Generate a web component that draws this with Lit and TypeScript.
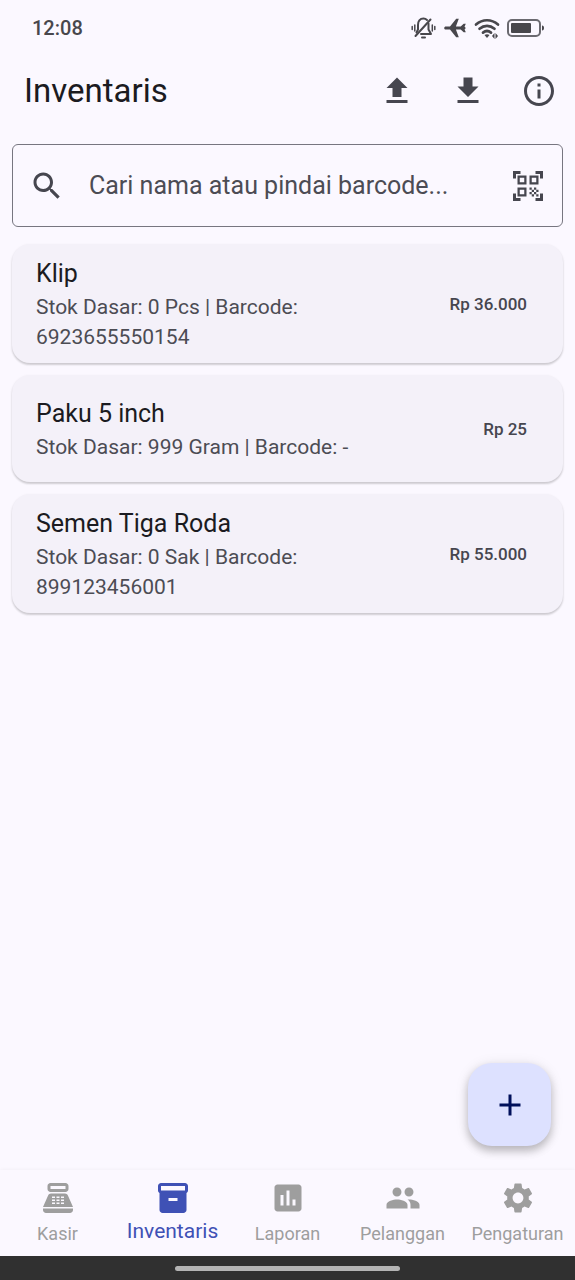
import { LitElement, html, svg, css } from "lit";
import { customElement, property, state } from "lit/decorators.js";
import { classMap } from "lit/directives/class-map.js";

const ICONS: Record<string, string> = {
  upload: "M5 18h14v2H5zM9 16h6v-6h4l-7-7-7 7h4z",
  download: "M19 9h-4V3H9v6H5l7 7 7-7zM5 18v2h14v-2H5z",
  info: "M11 7h2v2h-2zm0 4h2v6h-2zm1-9C6.48 2 2 6.48 2 12s4.48 10 10 10 10-4.48 10-10S17.52 2 12 2zm0 18c-4.41 0-8-3.59-8-8s3.59-8 8-8 8 3.59 8 8-3.59 8-8 8z",
  search: "M15.5 14h-.79l-.28-.27C15.41 12.59 16 11.11 16 9.5 16 5.91 13.09 3 9.5 3S3 5.91 3 9.5 5.91 16 9.5 16c1.61 0 3.09-.59 4.23-1.57l.27.28v.79l5 4.99L20.49 19l-4.99-5zm-6 0C7.01 14 5 11.99 5 9.5S7.01 5 9.5 5 14 7.01 14 9.5 11.99 14 9.5 14z",
  scan: "M9.5 6.5v3h-3v-3h3M11 5H5v6h6V5zm-1.5 9.5v3h-3v-3h3M11 13H5v6h6v-6zm6.5-6.5v3h-3v-3h3M19 5h-6v6h6V5zm-6 8h1.5v1.5H13V13zm1.5 1.5H16V16h-1.5v-1.5zM16 13h1.5v1.5H16V13zm-3 3h1.5v1.5H13V16zm1.5 1.5H16V19h-1.5v-1.5zM16 16h1.5v1.5H16V16zm1.5-1.5H19V16h-1.5v-1.5zm0 3H19V19h-1.5v-1.5zM22 7h-2V4h-3V2h5v5zm0 15v-5h-2v3h-3v2h5zM2 22h5v-2H4v-3H2v5zM2 2v5h2V4h3V2H2z",
  add: "M19 13h-6v6h-2v-6H5v-2h6V5h2v6h6v2z",
  register:
    "M17 2H7C5.9 2 5 2.9 5 4v2c0 1.1.9 2 2 2h10c1.1 0 2-.9 2-2V4c0-1.1-.9-2-2-2zm0 4H7V4h10v2zM20 22H4c-1.1 0-2-.9-2-2v-1h20v1c0 1.1-.9 2-2 2zM18.53 10.19C18.21 9.47 17.49 9 16.7 9H7.3c-.79 0-1.51.47-1.83 1.19L2 18h20l-3.47-7.81zM8 11h2v1H8zM8 13h2v1H8zM8 15h2v1H8zM11 11h2v1h-2zM11 13h2v1h-2zM11 15h2v1h-2zM14 11h2v1h-2zM14 13h2v1h-2zM14 15h2v1h-2z",
  box: "M20 2H4c-1 0-2 .9-2 2v3.01c0 .72.43 1.34 1 1.69V20c0 1.1 1.1 2 2 2h14c.9 0 2-.9 2-2V8.7c.57-.35 1-.97 1-1.69V4c0-1.1-1-2-2-2zm-5 12H9v-2h6v2zm5-7H4V4h16v3z",
  chart: "M19 3H5c-1.1 0-2 .9-2 2v14c0 1.1.9 2 2 2h14c1.1 0 2-.9 2-2V5c0-1.1-.9-2-2-2zM9 17H7v-7h2v7zm4 0h-2V7h2v10zm4 0h-2v-4h2v4z",
  people: "M16 11c1.66 0 2.99-1.34 2.99-3S17.66 5 16 5c-1.66 0-3 1.34-3 3s1.34 3 3 3zm-8 0c1.66 0 2.99-1.34 2.99-3S9.66 5 8 5C6.34 5 5 6.34 5 8s1.34 3 3 3zm0 2c-2.33 0-7 1.17-7 3.5V19h14v-2.500c0-2.330-4.670-3.500-7-3.500zm8 0c-.29 0-.62.02-.97.05 1.160.840 1.970 1.970 1.970 3.450V19h6v-2.500c0-2.330-4.670-3.500-7-3.500z",
  gear: "M19.140 12.940c.04-.3.06-.61.06-.94 0-.32-.02-.64-.07-.94l2.030-1.580c.18-.14.23-.41.12-.61l-1.920-3.320c-.12-.22-.37-.29-.59-.22l-2.390.96c-.5-.38-1.030-.7-1.620-.94l-.36-2.540c-.04-.24-.24-.41-.48-.41h-3.840c-.24 0-.43.17-.47.41l-.36 2.540c-.59.24-1.130.57-1.620.94l-2.390-.96c-.22-.08-.47 0-.59.22L2.740 8.870c-.12.21-.08.47.12.61l2.030 1.580c-.05.3-.09.63-.09.94s.02.64.07.94l-2.030 1.580c-.18.14-.23.41-.12.61l1.920 3.320c.12.22.37.29.59.22l2.390-.96c.5.38 1.030.7 1.620.94l.36 2.540c.05.24.24.41.48.41h3.840c.24 0 .44-.17.47-.41l.36-2.540c.59-.24 1.130-.56 1.620-.94l2.390.96c.22.08.47 0 .59-.22l1.920-3.320c.12-.22.07-.47-.12-.61l-2.010-1.580zM12 15.600c-1.980 0-3.600-1.620-3.600-3.600s1.620-3.600 3.600-3.600 3.600 1.620 3.600 3.600-1.620 3.600-3.600 3.600z",
};

@customElement("md-icon")
class MdIcon extends LitElement {
  @property() name = "";

  static styles = css`
    :host {
      display: block;
      width: 36px;
      height: 36px;
    }
    .glyph {
      display: block;
      width: 100%;
      height: 100%;
      fill: currentColor;
      fill-rule: evenodd;
    }
  `;

  render() {
    return html`<svg class="glyph" viewBox="0 0 24 24" aria-hidden="true">
      ${svg`<path d=${ICONS[this.name] ?? ""}></path>`}
    </svg>`;
  }
}

@customElement("status-bar")
class StatusBar extends LitElement {
  static styles = css`
    :host {
      display: flex;
      align-items: center;
      justify-content: space-between;
      height: 56px;
      padding: 0 30px 0 32px;
      color: #48474c;
      font-size: 20px;
      font-weight: 500;
    }
    .signals {
      display: flex;
      align-items: center;
      gap: 7px;
    }
    .line {
      fill: none;
      stroke: currentColor;
      stroke-linecap: round;
      stroke-linejoin: round;
    }
    .solid {
      fill: currentColor;
    }
    .shell {
      stroke: #6b6a70;
    }
  `;

  render() {
    return html`
      <time>12:08</time>
      <div class="signals">
        <svg width="25" height="24" viewBox="0 0 25 24" aria-hidden="true">
          <g class="line" stroke-width="2">
            <path d="M16 4C15 3 14 2.500 12.500 2.500C8.800 2.500 7 5.500 7 9v4.500L5.500 16.500"></path>
            <path d="M17.500 7.500v6l2.500 4.500H10"></path>
            <path d="M19.500 3.500L4.500 20"></path>
            <path d="M11 21.500h3"></path>
            <path d="M3.800 9v6M1.200 10.500v3M21.300 9v6M23.800 10.500v3" stroke-width="1.500"></path>
          </g>
        </svg>
        <svg width="24" height="24" viewBox="0 0 24 24" aria-hidden="true">
          <path
            class="solid"
            transform="matrix(-1 0 0 1 24 0)"
            d="M1.500 12c0-.8.4-1.200 1-1.300L1.200 7.800h2.100l3 2.600h4.800L8.200 2.800h2.600l6.200 7.600h4c1.100 0 1.800.7 1.800 1.600s-.7 1.600-1.800 1.600h-4l-6.200 7.600H8.200l2.900-7.600H6.300l-3 2.600H1.200l1.300-2.900c-.6-.1-1-.5-1-1.300z"
          ></path>
        </svg>
        <svg width="26" height="24" viewBox="0 0 26 24" aria-hidden="true">
          <g class="line" stroke-width="2.700">
            <path d="M2 8.500C8.500 2.800 17.500 2.800 24 8.500"></path>
            <path d="M5.500 12.700C10 8.900 16 8.900 20.500 12.700"></path>
            <path d="M9 16.600C11.500 14.600 14.500 14.600 17 16.600"></path>
          </g>
          <path class="solid" d="M10.500 19c1.500-1 3.500-1 5 0L13 22z"></path>
          <path class="solid" d="M18 20l2.500-3v6zM21.500 17v6l2.500-3z"></path>
        </svg>
        <svg width="38" height="18" viewBox="0 0 38 18" aria-hidden="true">
          <rect class="line shell" x="1" y="1" width="32" height="16" rx="4" stroke-width="2"></rect>
          <rect class="solid" x="4" y="4" width="20" height="10" rx="1"></rect>
          <path class="solid" d="M35 6.500c1.500 0 2 1 2 2.500s-.5 2.500-2 2.500z"></path>
        </svg>
      </div>
    `;
  }
}

interface Item {
  name: string;
  stock: string;
  barcode: string;
  price: string;
}

@customElement("item-card")
class ItemCard extends LitElement {
  @property({ attribute: false }) item!: Item;

  static styles = css`
    :host {
      display: flex;
      align-items: center;
      gap: 24px;
      box-sizing: border-box;
      min-height: 107px;
      padding: 12px 36px 11px 24px;
      border-radius: 18px;
      background: #f4f1f9;
      box-shadow:
        0 2px 2px rgba(0, 0, 0, 0.14),
        0 1px 3px rgba(0, 0, 0, 0.08);
    }
    .body {
      flex: 1;
      min-width: 0;
    }
    .name {
      margin: 0;
      color: #1b1b21;
      font-size: 25px;
      font-weight: 400;
      line-height: 36px;
    }
    .detail {
      max-width: 336px;
      margin: 0;
      color: #4c4c54;
      font-size: 21px;
      line-height: 30px;
    }
    .price {
      color: #46464f;
      font-size: 17px;
      font-weight: 500;
      white-space: nowrap;
    }
  `;

  render() {
    const { name, stock, barcode, price } = this.item;
    return html`
      <div class="body">
        <h2 class="name">${name}</h2>
        <p class="detail">Stok Dasar: ${stock} | Barcode: ${barcode}</p>
      </div>
      <span class="price">${price}</span>
    `;
  }
}

@customElement("app-root")
class AppRoot extends LitElement {
  @state() private active = "Inventaris";

  private items: Item[] = [
    { name: "Klip", stock: "0 Pcs", barcode: "6923655550154", price: "Rp 36.000" },
    { name: "Paku 5 inch", stock: "999 Gram", barcode: "-", price: "Rp 25" },
    { name: "Semen Tiga Roda", stock: "0 Sak", barcode: "899123456001", price: "Rp 55.000" },
  ];

  private tabs = [
    { label: "Kasir", icon: "register" },
    { label: "Inventaris", icon: "box" },
    { label: "Laporan", icon: "chart" },
    { label: "Pelanggan", icon: "people" },
    { label: "Pengaturan", icon: "gear" },
  ];

  static styles = css`
    :host {
      display: flex;
      flex-direction: column;
      min-height: 100vh;
      background: #fbf8ff;
      color: #1b1b21;
      font-family: Roboto, "Liberation Sans", sans-serif;
    }
    button {
      padding: 0;
      border: 0;
      background: none;
      color: inherit;
      font: inherit;
      cursor: pointer;
    }
    .bar {
      display: flex;
      align-items: center;
      justify-content: space-between;
      box-sizing: border-box;
      height: 76px;
      padding: 0 18px 7px 24px;
    }
    .title {
      margin: 0;
      font-size: 33px;
      font-weight: 400;
      line-height: 42px;
    }
    .actions {
      display: flex;
      gap: 35px;
      color: #46464f;
    }
    .content {
      position: relative;
      display: flex;
      flex: 1;
      flex-direction: column;
      padding: 12px;
    }
    .search {
      display: flex;
      align-items: center;
      box-sizing: border-box;
      height: 83px;
      margin-bottom: 17px;
      padding: 0 16px;
      border: 1px solid #777680;
      border-radius: 6px;
      color: #46464f;
    }
    .field {
      flex: 1;
      min-width: 0;
      margin: 0 16px 0 24px;
      padding: 0;
      border: 0;
      outline: 0;
      background: none;
      color: #1b1b21;
      font: inherit;
      font-size: 25px;
      line-height: 36px;
    }
    .field::placeholder {
      color: #4c4c54;
      opacity: 1;
    }
    .list {
      display: flex;
      flex-direction: column;
      gap: 12px;
      margin: 0;
      padding: 0;
      list-style: none;
    }
    .fab {
      position: absolute;
      right: 24px;
      bottom: 24px;
      display: grid;
      place-items: center;
      width: 83px;
      height: 83px;
      border-radius: 24px;
      background: #dde1ff;
      color: #00105b;
      box-shadow:
        0 5px 8px rgba(0, 0, 0, 0.22),
        0 2px 14px rgba(0, 0, 0, 0.1);
    }
    .nav {
      display: grid;
      grid-template-columns: repeat(5, 1fr);
      height: 86px;
      background: #fbf8ff;
      box-shadow: 0 -1px 3px rgba(0, 0, 0, 0.03);
    }
    .tab {
      display: flex;
      flex-direction: column;
      align-items: center;
      gap: 6px;
      padding-top: 10px;
      color: #9e9e9e;
      font-size: 18px;
      line-height: 24px;
    }
    .tab.on {
      gap: 3px;
      color: #3f51b5;
      font-size: 21px;
    }
    .gesture {
      display: grid;
      place-items: center;
      height: 24px;
      background: #303030;
    }
    .handle {
      width: 39%;
      height: 5px;
      border-radius: 3px;
      background: #b4b4b4;
    }
  `;

  render() {
    return html`
      <status-bar></status-bar>
      <header class="bar">
        <h1 class="title">Inventaris</h1>
        <div class="actions">
          <button aria-label="Impor"><md-icon name="upload"></md-icon></button>
          <button aria-label="Ekspor"><md-icon name="download"></md-icon></button>
          <button aria-label="Info"><md-icon name="info"></md-icon></button>
        </div>
      </header>
      <main class="content">
        <div class="search">
          <md-icon name="search"></md-icon>
          <input
            class="field"
            type="text"
            aria-label="Cari barang"
            placeholder="Cari nama atau pindai barcode..."
          />
          <button aria-label="Pindai barcode"><md-icon name="scan"></md-icon></button>
        </div>
        <ul class="list">
          ${this.items.map((item) => html`<li><item-card .item=${item}></item-card></li>`)}
        </ul>
        <button class="fab" aria-label="Tambah barang"><md-icon name="add"></md-icon></button>
      </main>
      <nav class="nav">
        ${this.tabs.map(
          (tab) => html`
            <button
              class=${classMap({ tab: true, on: tab.label === this.active })}
              @click=${() => (this.active = tab.label)}
            >
              <md-icon name=${tab.icon}></md-icon>
              <span>${tab.label}</span>
            </button>
          `,
        )}
      </nav>
      <div class="gesture"><div class="handle"></div></div>
    `;
  }
}
